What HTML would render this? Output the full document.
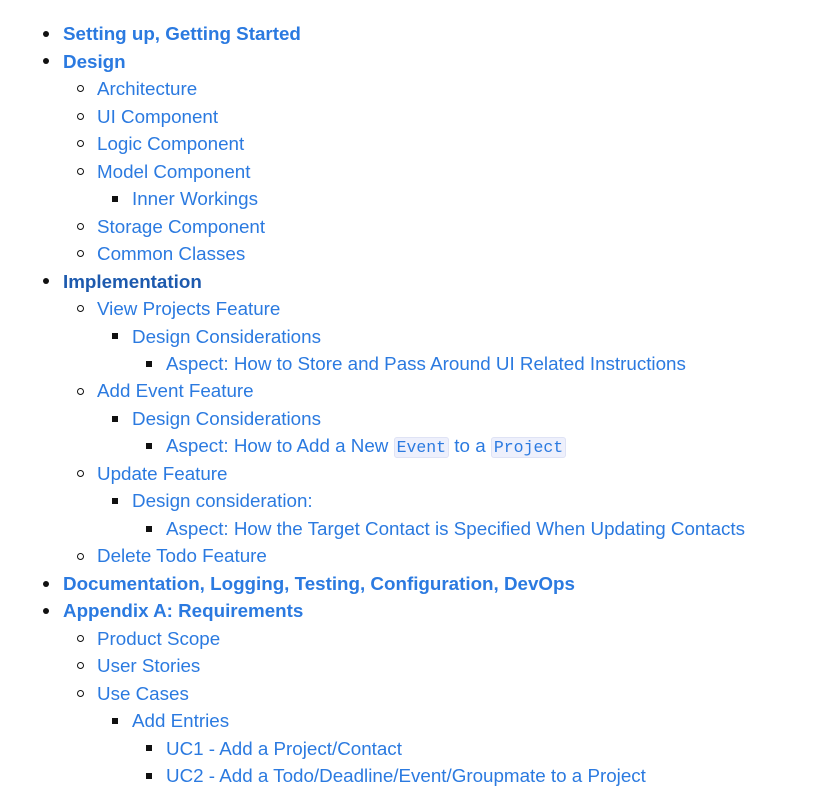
<!DOCTYPE html>
<html><head><meta charset="utf-8"><style>
body{margin:0;width:823px;height:790px;background:#fff;font-family:"Liberation Sans",sans-serif;font-size:18.8px;}
.l{position:absolute;height:27.5px;line-height:27.5px;color:#2b7ae0;white-space:nowrap}
.b{font-weight:bold}
.d{color:#1d5aae}
.m{position:absolute;}
.m1{width:6px;height:6px;border-radius:50%;background:#111;}
.m2{width:5px;height:5px;border-radius:50%;border:1.3px solid #111;}
.m3{width:6px;height:6px;background:#111;}
code{font-family:"Liberation Mono",monospace;font-size:16.5px;background:#eef0fc;border:1px solid #dfe3f5;border-radius:3px;padding:0 2px;color:#2b7ae0}
</style></head><body>
<div id="c"></div>
<script>
var items=[
[1,'Setting up, Getting Started','b'],
[1,'Design','b'],
[2,'Architecture'],[2,'UI Component'],[2,'Logic Component'],[2,'Model Component'],
[3,'Inner Workings'],[2,'Storage Component'],[2,'Common Classes'],
[1,'Implementation','b d'],
[2,'View Projects Feature'],[3,'Design Considerations'],
[4,'Aspect: How to Store and Pass Around UI Related Instructions'],
[2,'Add Event Feature'],[3,'Design Considerations'],
[4,'Aspect: How to Add a New <code>Event</code> to a <code>Project</code>'],
[2,'Update Feature'],[3,'Design consideration:'],
[4,'Aspect: How the Target Contact is Specified When Updating Contacts'],
[2,'Delete Todo Feature'],
[1,'Documentation, Logging, Testing, Configuration, DevOps','b'],
[1,'Appendix A: Requirements','b'],
[2,'Product Scope'],[2,'User Stories'],[2,'Use Cases'],[3,'Add Entries'],
[4,'UC1 - Add a Project/Contact'],[4,'UC2 - Add a Todo/Deadline/Event/Groupmate to a Project']
];
var tx=[0,63,97,132,166],mx=[0,43,77,112,146],h='';
items.forEach(function(it,i){
 var cy=34+i*27.48;
 var cls=it[0]==1?'m1':it[0]==2?'m2':'m3';
 var off=it[0]==2?3.6:3;
 h+='<div class="m '+cls+'" style="left:'+mx[it[0]]+'px;top:'+(cy-off)+'px"></div>';
 h+='<div class="l '+(it[2]||'')+'" style="left:'+tx[it[0]]+'px;top:'+(cy-13.75)+'px">'+it[1]+'</div>';
});
document.getElementById('c').innerHTML=h;
</script>
</body></html>
